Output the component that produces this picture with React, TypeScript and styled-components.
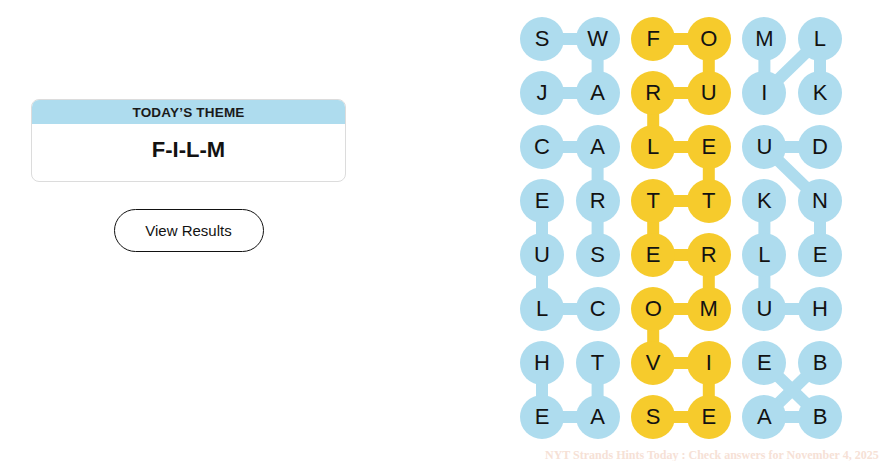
import styled, { createGlobalStyle } from "styled-components";

const GlobalStyle = createGlobalStyle`
  html, body {
    margin: 0;
    padding: 0;
    background: #ffffff;
    font-family: "Liberation Sans", Arial, sans-serif;
    color: #121212;
  }
`;

const BLUE = "#aedcee";
const YELLOW = "#f6cb2c";

const COLS = 6;
const ROWS = 8;
const CELL = 44;
const COL_PITCH = 55.6;
const ROW_PITCH = 54;

const Page = styled.div`
  display: flex;
  width: 879px;
  height: 461px;
  overflow: hidden;
`;

const LeftPanel = styled.section`
  flex: 0 0 315px;
  display: flex;
  flex-direction: column;
  align-items: center;
  gap: 27px;
  margin: 99px 0 0 31px;
`;

const ThemeCard = styled.div`
  width: 100%;
  border: 1px solid #dcdcdc;
  border-radius: 8px;
  overflow: hidden;
  box-sizing: border-box;
`;

const ThemeHeader = styled.div`
  height: 24px;
  display: flex;
  align-items: center;
  justify-content: center;
  background: ${BLUE};
  font-size: 13.5px;
  font-weight: 700;
  letter-spacing: 0.2px;
  color: #1a1a1a;
`;

const ThemeBody = styled.div`
  height: 57px;
  display: flex;
  align-items: center;
  justify-content: center;
  font-size: 22px;
  font-weight: 700;
  color: #121212;
  padding-bottom: 6px;
  box-sizing: border-box;
`;

const ResultsButton = styled.button`
  width: 150px;
  height: 43px;
  border: 1px solid #121212;
  border-radius: 22px;
  background: #ffffff;
  font-family: "Liberation Sans", Arial, sans-serif;
  font-size: 15px;
  color: #121212;
  cursor: pointer;
`;

const BoardColumn = styled.section`
  flex: 0 0 359px;
  display: flex;
  flex-direction: column;
  margin: 17px 0 0 174px;
  overflow: hidden;
`;

const Board = styled.div`
  position: relative;
  display: grid;
  grid-template-columns: repeat(${COLS}, ${CELL}px);
  grid-template-rows: repeat(${ROWS}, ${CELL}px);
  column-gap: ${COL_PITCH - CELL}px;
  row-gap: ${ROW_PITCH - CELL}px;
`;

const Links = styled.svg`
  position: absolute;
  inset: 0;
  width: 100%;
  height: 100%;
  pointer-events: none;
`;

const Letter = styled.div<{ $tone: "blue" | "yellow" }>`
  position: relative;
  width: ${CELL}px;
  height: ${CELL}px;
  border-radius: 50%;
  background: ${(p) => (p.$tone === "yellow" ? YELLOW : BLUE)};
  display: flex;
  align-items: center;
  justify-content: center;
  font-size: 22px;
  color: #121212;
`;

const Watermark = styled.div`
  margin: 9px 0 0 25px;
  white-space: nowrap;
  font-family: "Liberation Serif", serif;
  font-size: 12px;
  font-weight: 700;
  color: #f6e1d6;
`;

const letters = [
  "SWFOML",
  "JARUIK",
  "CALEUD",
  "ERTTKN",
  "USERLE",
  "LCOMUH",
  "HTVIEB",
  "EASEAB",
];

type Pt = [number, number];

const blueLinks: [Pt, Pt][] = [
  [[0, 0], [0, 1]], [[0, 1], [1, 1]], [[1, 0], [1, 1]],
  [[2, 0], [2, 1]], [[2, 1], [3, 1]], [[3, 1], [4, 1]],
  [[3, 0], [4, 0]], [[4, 0], [5, 0]], [[5, 0], [5, 1]],
  [[6, 0], [7, 0]], [[7, 0], [7, 1]], [[7, 1], [6, 1]],
  [[0, 4], [1, 4]], [[1, 4], [0, 5]], [[0, 5], [1, 5]],
  [[2, 5], [2, 4]], [[2, 4], [3, 5]], [[3, 5], [4, 5]],
  [[5, 5], [5, 4]], [[5, 4], [4, 4]], [[4, 4], [3, 4]],
  [[6, 5], [7, 4]], [[7, 4], [7, 5]], [[7, 5], [6, 4]],
];

const spangram: Pt[] = [
  [0, 2], [0, 3], [1, 3], [1, 2], [2, 2], [2, 3], [3, 3], [3, 2],
  [4, 2], [4, 3], [5, 3], [5, 2], [6, 2], [6, 3], [7, 3], [7, 2],
];

const yellowLinks: [Pt, Pt][] = spangram.slice(1).map((p, i) => [spangram[i], p]);

const cx = (c: number) => CELL / 2 + c * COL_PITCH;
const cy = (r: number) => CELL / 2 + r * ROW_PITCH;

export default function App() {
  return (
    <>
      <GlobalStyle />
      <Page>
        <LeftPanel>
          <ThemeCard>
            <ThemeHeader>TODAY’S THEME</ThemeHeader>
            <ThemeBody>F-I-L-M</ThemeBody>
          </ThemeCard>
          <ResultsButton>View Results</ResultsButton>
        </LeftPanel>

        <BoardColumn>
          <Board>
            <Links>
              {blueLinks.map(([a, b], i) => (
                <line
                  key={`b${i}`}
                  x1={cx(a[1])}
                  y1={cy(a[0])}
                  x2={cx(b[1])}
                  y2={cy(b[0])}
                  stroke={BLUE}
                  strokeWidth={12}
                />
              ))}
              {yellowLinks.map(([a, b], i) => (
                <line
                  key={`y${i}`}
                  x1={cx(a[1])}
                  y1={cy(a[0])}
                  x2={cx(b[1])}
                  y2={cy(b[0])}
                  stroke={YELLOW}
                  strokeWidth={12}
                />
              ))}
            </Links>
            {letters.map((row, r) =>
              row.split("").map((ch, c) => (
                <Letter key={`${r}-${c}`} $tone={c === 2 || c === 3 ? "yellow" : "blue"}>
                  {ch}
                </Letter>
              ))
            )}
          </Board>
          <Watermark>NYT Strands Hints Today : Check answers for November 4, 2025</Watermark>
        </BoardColumn>
      </Page>
    </>
  );
}
